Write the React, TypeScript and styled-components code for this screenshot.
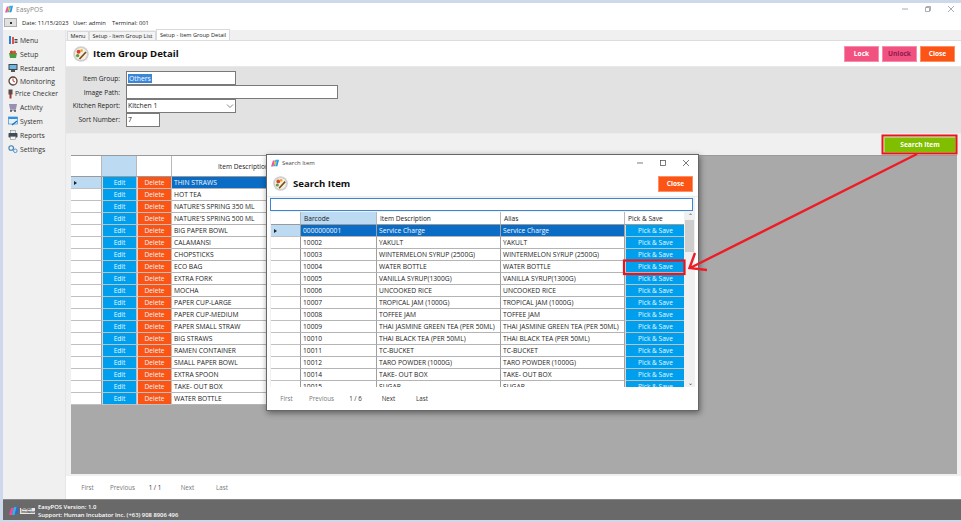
import React from "react";
import styled, { createGlobalStyle } from "styled-components";

const Global = createGlobalStyle`
  html, body { margin: 0; padding: 0; background: #cdd8ea; }
  * { box-sizing: border-box; }
  #root { width: 961px; height: 522px; overflow: hidden; }
`;

const Page = styled.div`
  position: relative;
  width: 961px;
  height: 522px;
  padding: 3px 0 2px 3px;
  font-family: "Open Sans", "Noto Sans", "Liberation Sans", sans-serif;
  font-size: 6.7px;
  color: #222;
  overflow: hidden;
`;
const Win = styled.div`
  display: flex;
  flex-direction: column;
  height: 517px;
  background: #fff;
`;
const TitleBar = styled.div`
  display: flex;
  align-items: center;
  height: 12px;
  flex: none;
  padding-left: 2px;
  gap: 3px;
  color: #8a8a8a;
`;
const WinCtrls = styled.div<{ $pr?: number }>`
  margin-left: auto;
  display: flex;
  align-items: center;
  gap: 17px;
  padding-right: ${(p) => p.$pr ?? 7}px;
  color: #999;
`;
const InfoBar = styled.div`
  display: flex;
  align-items: center;
  height: 15px;
  flex: none;
  padding: 0 0 0 1px;
  font-size: 5.8px;
`;
const MiniBtn = styled.div`
  width: 13px;
  height: 9px;
  background: #e1e1e1;
  border: 1px solid #adadad;
  display: flex;
  align-items: center;
  justify-content: center;
  margin-right: 5px;
  flex: none;
  &::after { content: ""; width: 2px; height: 2px; background: #333; }
`;
const InfoText = styled.span<{ $w: number }>`
  width: ${(p) => p.$w}px;
  flex: none;
  white-space: nowrap;
`;
const Body = styled.div`
  display: flex;
  flex: 1;
  min-height: 0;
`;
const Sidebar = styled.nav`
  width: 62px;
  flex: none;
  background: #f0f0f0;
  padding-top: 3px;
  display: flex;
  flex-direction: column;
`;
const NavItem = styled.div<{ $h: number; $pl?: number }>`
  display: flex;
  align-items: center;
  height: ${(p) => p.$h}px;
  padding-left: ${(p) => p.$pl ?? 5}px;
  gap: 2px;
  font-size: 6.8px;
  color: #333;
`;
const Main = styled.main`
  flex: 1;
  min-width: 0;
  display: flex;
  flex-direction: column;
  border-left: 1px solid #e6e6e6;
`;
const Tabs = styled.div`
  display: flex;
  align-items: flex-end;
  height: 11px;
  flex: none;
  background: #f0f0f0;
  padding-left: 1px;
  border-bottom: 1px solid #ddd;
`;
const Tab = styled.div<{ $on?: boolean; $w: number }>`
  width: ${(p) => p.$w}px;
  height: ${(p) => (p.$on ? 11 : 9)}px;
  display: flex;
  align-items: center;
  justify-content: center;
  font-size: 5.6px;
  white-space: nowrap;
  background: ${(p) => (p.$on ? "#fff" : "#f4f4f4")};
  border: 1px solid #d9d9d9;
  border-bottom: 0;
`;
const Header = styled.div`
  display: flex;
  align-items: center;
  height: 26px;
  flex: none;
  padding: 0 6px 0 7px;
  border-bottom: 1px solid #e8e8e8;
`;
const PageTitle = styled.h1`
  margin: 0 0 0 4px;
  font-size: 9.6px;
  font-weight: 700;
  color: #111;
`;
const Actions = styled.div`
  margin-left: auto;
  display: flex;
  gap: 3px;
`;
const ActionBtn = styled.button<{ $bg: string; $fg?: string; $w?: number }>`
  width: ${(p) => p.$w ?? 35}px;
  height: 16px;
  padding: 0;
  font: 700 6.6px "Open Sans", "Noto Sans", sans-serif;
  color: ${(p) => p.$fg ?? "#fff"};
  background: ${(p) => p.$bg};
  border: 1px solid rgba(255, 255, 255, 0.35);
`;
const Form = styled.section`
  height: 67px;
  flex: none;
  background: #e2e2e2;
  padding-top: 4px;
  display: flex;
  flex-direction: column;
  border-bottom: 1px solid #ececec;
`;
const Field = styled.div<{ $h: number }>`
  display: flex;
  align-items: center;
  height: ${(p) => p.$h}px;
`;
const FieldLabel = styled.label`
  width: 54px;
  margin-right: 6px;
  text-align: right;
  font-size: 6.6px;
  white-space: nowrap;
`;
const TextBox = styled.div<{ $w: number }>`
  width: ${(p) => p.$w}px;
  height: 14px;
  background: #fff;
  border: 1px solid #7a7a7a;
  padding-left: 1px;
  display: flex;
  align-items: center;
  justify-content: space-between;
  font-size: 6.8px;
`;
const Sel = styled.span`
  background: #3a86d8;
  color: #fff;
  padding: 0 1px;
`;
const ToolRow = styled.div`
  height: 21px;
  flex: none;
  background: #f0f0f0;
  display: flex;
  justify-content: flex-end;
  align-items: center;
  padding-right: 5px;
`;
const GridWrap = styled.div`
  flex: 1;
  min-height: 0;
  padding: 0 4px 2px 5px;
  background: #f0f0f0;
`;
const GridArea = styled.div`
  height: 100%;
  background: #a9a9a9;
  border-top: 1px solid #9a9a9a;
  overflow: hidden;
`;
const Row = styled.div<{ $cols: string; $h: number }>`
  display: grid;
  grid-template-columns: ${(p) => p.$cols};
  height: ${(p) => p.$h}px;
  background: #fff;
  color: #222;
  width: fit-content;
`;
const HeadCell = styled.div<{ $on?: boolean; $center?: boolean }>`
  display: flex;
  align-items: center;
  justify-content: ${(p) => (p.$center ? "center" : "flex-start")};
  padding-left: ${(p) => (p.$center ? 0 : 3)}px;
  background: ${(p) => (p.$on ? "#bcdaf2" : "#fff")};
  border-right: 1px solid #b8b8b8;
  border-bottom: 1px solid #9a9a9a;
  font-size: 6.6px;
  white-space: nowrap;
`;
const HeadMark = styled.div<{ $sel?: boolean }>`
  background: ${(p) => (p.$sel ? "#bcdaf2" : "#fff")};
  border-right: 1px solid #9a9a9a;
  border-bottom: 1px solid #c0c0c0;
  display: flex;
  align-items: center;
  padding-left: 3px;
`;
const Arrow = styled.span`
  width: 0;
  height: 0;
  border-left: 3px solid #222;
  border-top: 2px solid transparent;
  border-bottom: 2px solid transparent;
`;
const Cell = styled.div<{ $sel?: boolean }>`
  display: flex;
  align-items: center;
  padding-left: 2px;
  overflow: hidden;
  white-space: nowrap;
  font-size: 6.7px;
  background: ${(p) => (p.$sel ? "#0a6cc4" : "#fff")};
  color: ${(p) => (p.$sel ? "#f2f8ff" : "#222")};
  border-right: 1px solid #a0a0a0;
  border-bottom: 1px solid #b4b4b4;
`;
const RowBtn = styled.button<{ $bg: string }>`
  margin: 0;
  padding: 0;
  font: 400 6.6px "Open Sans", "Noto Sans", sans-serif;
  color: #e8f6ff;
  background: ${(p) => p.$bg};
  border: 0;
  border-right: 1px solid #c0c0c0;
  border-bottom: 1px solid #c0c0c0;
  border-left: 1px solid #d8d8d8;
  border-top: 0;
`;
const Pager = styled.div<{ $pl: number; $h: number }>`
  display: flex;
  align-items: center;
  height: ${(p) => p.$h}px;
  flex: none;
  padding-left: ${(p) => p.$pl}px;
  background: #fff;
`;
const PagerItem = styled.div<{ $w: number; $dim?: boolean }>`
  width: ${(p) => p.$w}px;
  text-align: center;
  font-size: 6.2px;
  color: ${(p) => (p.$dim ? "#777" : "#333")};
`;
const Footer = styled.footer`
  height: 21px;
  flex: none;
  background: #696969;
  border-top: 1px solid #888;
  display: flex;
  align-items: center;
  padding: 1px 0 0 6px;
  gap: 1px;
  color: #fff;
  font-weight: 600;
  font-size: 5.85px;
  line-height: 8px;
`;
const LogoWord = styled.div`
  width: 15px;
  font-size: 3px;
  line-height: 3px;
  color: #111;
  background: #e8e8e8;
  padding: 0 1px;
  overflow: hidden;
`;
const FooterText = styled.div`
  margin-left: 2px;
`;

const Dialog = styled.div`
  position: absolute;
  left: 266px;
  top: 154px;
  width: 433px;
  height: 257px;
  background: #fff;
  border: 1px solid #666;
  box-shadow: 1px 2px 6px rgba(0, 0, 0, 0.45);
  display: flex;
  flex-direction: column;
`;
const DlgTitle = styled.div`
  display: flex;
  align-items: center;
  height: 16px;
  flex: none;
  padding-left: 4px;
  gap: 3px;
  font-size: 5.9px;
  color: #444;
`;
const DlgHeader = styled.div`
  display: flex;
  align-items: center;
  height: 26px;
  flex: none;
  padding: 0 5px 0 6px;
  border-bottom: 1px solid #ececec;
`;
const DlgTitleText = styled.h2`
  margin: 0 0 0 5px;
  font-size: 9.6px;
  font-weight: 700;
  color: #111;
`;
const DlgBody = styled.div`
  background: #f0f0f0;
  flex: none;
  height: 190px;
  margin: 0 3px;
  padding: 0;
  display: flex;
  flex-direction: column;
  overflow: hidden;
`;
const SearchBox = styled.div`
  height: 13px;
  flex: none;
  margin: 1px 2px 1px 0;
  background: #fff;
  border: 1px solid #3a86d8;
`;
const DlgGrid = styled.div`
  display: flex;
  margin-left: 1px;
  height: 175px;
  overflow: hidden;
`;
const DlgRows = styled.div`
  width: 415px;
  overflow: hidden;
`;
const Scroll = styled.div`
  width: 10px;
  margin-left: 1px;
  background: #f0f0f0;
  display: flex;
  flex-direction: column;
  align-items: center;
  justify-content: space-between;
  font-size: 6px;
  color: #333;
  position: relative;
`;
const ScrollThumb = styled.div`
  position: absolute;
  top: 8px;
  left: 0;
  width: 9px;
  height: 32px;
  background: #cdcdcd;
`;

const Logo = ({ s = 8 }: { s?: number }) => (
  <svg width={s} height={s} viewBox="0 0 10 10">
    <path d="M0 9.5 L2.4 2 L5 2 L3 9.5Z" fill="#f0559f" />
    <path d="M5.5 9 L8 1 L10 1 L8 9Z" fill="#2a8fe8" />
    <path d="M3 9 L5.5 1 L8 1 L5.5 9Z" fill="#29b6f0" />
    <path d="M3.4 3.6 L5 2.4 L6.8 7 L5.2 8Z" fill="#f7c51e" />
  </svg>
);

const Plate = ({ s = 16 }: { s?: number }) => (
  <svg width={s} height={s} viewBox="0 0 16 16">
    <circle cx="8" cy="8" r="7.8" fill="#cfcfcf" />
    <circle cx="8" cy="8" r="6" fill="#f8f1e2" />
    <circle cx="5.6" cy="5.8" r="2" fill="#d8432a" />
    <circle cx="4.6" cy="9.6" r="1.7" fill="#5aa13a" />
    <circle cx="8.6" cy="4.6" r="1.4" fill="#f0a52a" />
    <path d="M6.5 13 L13 6" stroke="#7a4a22" strokeWidth="1.7" />
  </svg>
);

const Ic = ({ children }: { children: React.ReactNode }) => (
  <svg width="10" height="10" viewBox="0 0 10 10">
    {children}
  </svg>
);

const navIcons: Record<string, React.ReactNode> = {
  Menu: (
    <Ic>
      <rect x="1" y="1" width="2" height="8" fill="#2d7fd0" />
      <rect x="4" y="2" width="2" height="7" fill="#e0544a" />
      <rect x="6.5" y="4" width="3" height="1.4" fill="#444" />
      <rect x="6.5" y="6.5" width="3" height="1.4" fill="#444" />
    </Ic>
  ),
  Setup: (
    <Ic>
      <path d="M1 4 H9 L8 9 H2Z" fill="#4d9b3f" />
      <circle cx="3.5" cy="3" r="1.6" fill="#d8352a" />
      <circle cx="6.5" cy="3" r="1.6" fill="#e0473a" />
    </Ic>
  ),
  Restaurant: (
    <Ic>
      <rect x="0.5" y="1" width="9" height="6" fill="#37474f" />
      <rect x="1.5" y="2" width="7" height="4" fill="#6fb7dd" />
      <rect x="3" y="7" width="4" height="2" fill="#555" />
    </Ic>
  ),
  Monitoring: (
    <Ic>
      <circle cx="5" cy="5" r="4" fill="#fff" stroke="#5a4638" strokeWidth="1.3" />
      <path d="M5 5 L5 2.4 M5 5 L7 6" stroke="#c43a2e" strokeWidth="1" />
    </Ic>
  ),
  Activity: (
    <Ic>
      <path d="M1 2 H9 L8 7 H2Z" fill="#9a8fb5" />
      <path d="M2 8 H8" stroke="#5f6f8a" strokeWidth="1" />
      <circle cx="3" cy="9" r="0.9" fill="#444" />
      <circle cx="7" cy="9" r="0.9" fill="#444" />
    </Ic>
  ),
  System: (
    <Ic>
      <rect x="0.5" y="1" width="9" height="7" fill="#e8f1fa" stroke="#3d8fd8" strokeWidth="0.7" />
      <rect x="0.5" y="1" width="9" height="2" fill="#2f8fe0" />
      <path d="M4 9 L9 5" stroke="#2170c0" strokeWidth="1.4" />
    </Ic>
  ),
  Reports: (
    <Ic>
      <rect x="2.5" y="0.5" width="5" height="3" fill="#eee" stroke="#777" strokeWidth="0.5" />
      <rect x="0.5" y="3" width="9" height="4.5" rx="0.8" fill="#3e4c59" />
      <rect x="2.5" y="6.5" width="5" height="3" fill="#f4f4f4" stroke="#777" strokeWidth="0.5" />
    </Ic>
  ),
  Settings: (
    <Ic>
      <circle cx="3.2" cy="4" r="2.3" fill="none" stroke="#3f7fb8" strokeWidth="1.1" />
      <circle cx="7.3" cy="6.8" r="1.8" fill="none" stroke="#4c9bd4" strokeWidth="1" />
    </Ic>
  ),
};

const nav: { n: string; h: number; pl?: number }[] = [
  { n: "Menu", h: 14 },
  { n: "Setup", h: 14 },
  { n: "Restaurant", h: 14 },
  { n: "Monitoring", h: 12.5 },
  { n: "Price Checker", h: 12.5, pl: 5 },
  { n: "Activity", h: 14 },
  { n: "System", h: 14 },
  { n: "Reports", h: 14 },
  { n: "Settings", h: 14 },
];

const items = [
  "THIN STRAWS", "HOT TEA", "NATURE'S SPRING 350 ML", "NATURE'S SPRING 500 ML", "BIG PAPER BOWL",
  "CALAMANSI", "CHOPSTICKS", "ECO BAG", "EXTRA FORK", "MOCHA", "PAPER CUP-LARGE", "PAPER CUP-MEDIUM",
  "PAPER SMALL STRAW", "BIG STRAWS", "RAMEN CONTAINER", "SMALL PAPER BOWL", "EXTRA SPOON",
  "TAKE- OUT BOX", "WATER BOTTLE",
];

const results: [string, string][] = [
  ["0000000001", "Service Charge"], ["10002", "YAKULT"], ["10003", "WINTERMELON SYRUP (2500G)"],
  ["10004", "WATER BOTTLE"], ["10005", "VANILLA SYRUP(1300G)"], ["10006", "UNCOOKED RICE"],
  ["10007", "TROPICAL JAM (1000G)"], ["10008", "TOFFEE JAM"], ["10009", "THAI JASMINE GREEN TEA (PER 50ML)"],
  ["10010", "THAI BLACK TEA (PER 50ML)"], ["10011", "TC-BUCKET"], ["10012", "TARO POWDER (1000G)"],
  ["10014", "TAKE- OUT BOX"], ["10015", "SUGAR"],
];

const mainCols = "31px 35px 35px 144px";
const dlgCols = "30px 76px 124px 124px 61px";

export default function App() {
  return (
    <Page>
      <Global />
      <Win>
        <TitleBar>
          <Logo />
          <span>EasyPOS</span>
          <WinCtrls>
            <svg width="6" height="6" viewBox="0 0 6 6"><path d="M0 3 H6" stroke="#888" strokeWidth="0.7" /></svg>
            <svg width="6" height="6" viewBox="0 0 6 6"><path d="M0.5 1.5 H4.5 V5.5 H0.5Z M1.5 1.5 V0.5 H5.5 V4.5 H4.5" fill="none" stroke="#888" strokeWidth="0.7" /></svg>
            <svg width="6" height="6" viewBox="0 0 6 6"><path d="M0 0 L6 6 M6 0 L0 6" stroke="#888" strokeWidth="0.7" /></svg>
          </WinCtrls>
        </TitleBar>
        <InfoBar>
          <MiniBtn />
          <InfoText $w={51}>Date: 11/15/2023</InfoText>
          <InfoText $w={39}>User: admin</InfoText>
          <InfoText $w={50}>Terminal: 001</InfoText>
        </InfoBar>
        <Body>
          <Sidebar>
            {nav.map((n) => (
              <NavItem key={n.n} $h={n.h} $pl={n.pl}>
                {navIcons[n.n] ?? (
                  <svg width="5" height="10" viewBox="0 0 5 10">
                    <rect x="0.5" y="0.5" width="4" height="5" fill="#5a4a4a" />
                    <rect x="1.5" y="5" width="2" height="4.5" fill="#a33" />
                  </svg>
                )}
                <span>{n.n}</span>
              </NavItem>
            ))}
          </Sidebar>
          <Main>
            <Tabs>
              <Tab $w={22}>Menu</Tab>
              <Tab $w={67}>Setup - Item Group List</Tab>
              <Tab $w={74} $on>Setup - Item Group Detail</Tab>
            </Tabs>
            <Header>
              <Plate />
              <PageTitle>Item Group Detail</PageTitle>
              <Actions>
                <ActionBtn $bg="#f2527f">Lock</ActionBtn>
                <ActionBtn $bg="#f2527f" $fg="#8f1a50">Unlock</ActionBtn>
                <ActionBtn $bg="#fb5414">Close</ActionBtn>
              </Actions>
            </Header>
            <Form>
              <Field $h={14.5}>
                <FieldLabel>Item Group:</FieldLabel>
                <TextBox $w={110}><Sel>Others</Sel></TextBox>
              </Field>
              <Field $h={13.5}>
                <FieldLabel>Image Path:</FieldLabel>
                <TextBox $w={212} />
              </Field>
              <Field $h={13.5}>
                <FieldLabel>Kitchen Report:</FieldLabel>
                <TextBox $w={110}>
                  Kitchen 1
                  <svg width="8" height="6" viewBox="0 0 8 6" style={{ marginRight: 1 }}>
                    <path d="M1 1.5 L4 4.5 L7 1.5" fill="none" stroke="#555" strokeWidth="0.7" />
                  </svg>
                </TextBox>
              </Field>
              <Field $h={14}>
                <FieldLabel>Sort Number:</FieldLabel>
                <TextBox $w={34}>7</TextBox>
              </Field>
            </Form>
            <ToolRow>
              <ActionBtn $bg="#7fbf00" $w={72}>Search Item</ActionBtn>
            </ToolRow>
            <GridWrap>
              <GridArea>
                <Row $cols={mainCols} $h={21}>
                  <HeadCell />
                  <HeadCell $on />
                  <HeadCell />
                  <HeadCell $center>Item Description</HeadCell>
                </Row>
                {items.map((it, i) => (
                  <Row key={it} $cols={mainCols} $h={12}>
                    <HeadMark $sel={i === 0}>{i === 0 && <Arrow />}</HeadMark>
                    <RowBtn $bg="#009fee">Edit</RowBtn>
                    <RowBtn $bg="#fb5414">Delete</RowBtn>
                    <Cell $sel={i === 0}>{it}</Cell>
                  </Row>
                ))}
              </GridArea>
            </GridWrap>
            <Pager $pl={4} $h={23}>
              <PagerItem $w={35} $dim>First</PagerItem>
              <PagerItem $w={35} $dim>Previous</PagerItem>
              <PagerItem $w={30}>1 / 1</PagerItem>
              <PagerItem $w={35} $dim>Next</PagerItem>
              <PagerItem $w={34} $dim>Last</PagerItem>
            </Pager>
          </Main>
        </Body>
        <Footer>
          <svg width="10" height="10" viewBox="0 0 10 10">
            <path d="M0 9 L2 2 L5 2 L3 9Z" fill="#ef4a9a" />
            <path d="M3 9 L5 1 L7.5 1 L5.5 9Z" fill="#29b6f0" />
            <path d="M6 8 L8 1 L10 1 L8 8Z" fill="#1f6fe0" />
          </svg>
          <LogoWord>Human Incubator</LogoWord>
          <FooterText>
            EasyPOS Version: 1.0
            <br />
            Support: Human Incubator Inc. (+63) 908 8906 496
          </FooterText>
        </Footer>
      </Win>

      <Dialog>
        <DlgTitle>
          <Logo />
          <span>Search Item</span>
          <WinCtrls $pr={9}>
            <svg width="6" height="6" viewBox="0 0 6 6"><path d="M0 3 H6" stroke="#444" strokeWidth="0.7" /></svg>
            <svg width="6" height="6" viewBox="0 0 6 6"><rect x="0.5" y="0.5" width="5" height="5" fill="none" stroke="#444" strokeWidth="0.7" /></svg>
            <svg width="6" height="6" viewBox="0 0 6 6"><path d="M0 0 L6 6 M6 0 L0 6" stroke="#444" strokeWidth="0.7" /></svg>
          </WinCtrls>
        </DlgTitle>
        <DlgHeader>
          <Plate s={15} />
          <DlgTitleText>Search Item</DlgTitleText>
          <Actions>
            <ActionBtn $bg="#fb5414">Close</ActionBtn>
          </Actions>
        </DlgHeader>
        <DlgBody>
          <SearchBox />
          <DlgGrid>
            <DlgRows>
              <Row $cols={dlgCols} $h={13}>
                <HeadCell />
                <HeadCell $on>Barcode</HeadCell>
                <HeadCell>Item Description</HeadCell>
                <HeadCell>Alias</HeadCell>
                <HeadCell>Pick &amp; Save</HeadCell>
              </Row>
              {results.map(([code, name], i) => (
                <Row key={code} $cols={dlgCols} $h={12}>
                  <HeadMark $sel={i === 0}>{i === 0 && <Arrow />}</HeadMark>
                  <Cell $sel={i === 0}>{code}</Cell>
                  <Cell $sel={i === 0}>{name}</Cell>
                  <Cell $sel={i === 0}>{name}</Cell>
                  <RowBtn $bg="#009fee">Pick &amp; Save</RowBtn>
                </Row>
              ))}
            </DlgRows>
            <Scroll>
              <span>⌃</span>
              <ScrollThumb />
              <span>⌄</span>
            </Scroll>
          </DlgGrid>
        </DlgBody>
        <Pager $pl={2} $h={23}>
          <PagerItem $w={35} $dim>First</PagerItem>
          <PagerItem $w={35} $dim>Previous</PagerItem>
          <PagerItem $w={33}>1 / 6</PagerItem>
          <PagerItem $w={33}>Next</PagerItem>
          <PagerItem $w={34}>Last</PagerItem>
        </Pager>
      </Dialog>

      <svg
        width="961"
        height="522"
        viewBox="0 0 961 522"
        style={{ position: "absolute", left: 0, top: 0, pointerEvents: "none" }}
      >
        <rect x="882.5" y="135.5" width="74" height="18" fill="none" stroke="#e8141f" strokeWidth="2" />
        <rect x="624" y="260.5" width="60.5" height="13.5" fill="none" stroke="#e8141f" strokeWidth="2.2" />
        <path d="M917 154 L690 268 M695 253 L689.5 268 L707 270" fill="none" stroke="#ee1c25" strokeWidth="2.4" />
      </svg>
    </Page>
  );
}
